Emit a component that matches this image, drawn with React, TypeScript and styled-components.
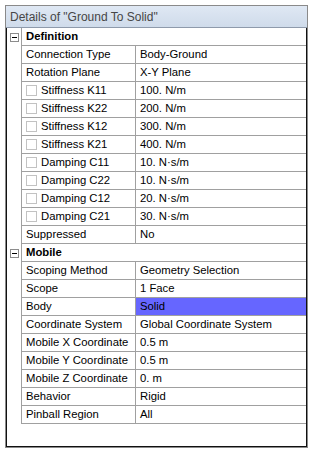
import styled, { createGlobalStyle } from 'styled-components'

// --------------------------------------------------------------------------------------------------------------
const GlobalStyle = createGlobalStyle`
  body {
    margin: 0;
    background: #ffffff;
    font-family: "Liberation Sans", Arial, sans-serif;
  }
`

const Panel = styled.div`
  margin: 5px 0 0 5px;
  width: 303px;
  height: 443px;
  box-sizing: border-box;
  border: 1px solid #8a8a8a;
  display: flex;
  flex-direction: column;
  background: #ffffff;
`

const TitleBar = styled.div`
  height: 22px;
  box-sizing: border-box;
  flex-shrink: 0;
  display: flex;
  align-items: center;
  padding-left: 4px;
  background: linear-gradient(#dfe8f4, #cfdbea);
  border-bottom: 1px solid #8e9aab;
  font-size: 12px;
  color: #464646;
  white-space: nowrap;
`

const Body = styled.div`
  flex: 1;
  display: flex;
  flex-direction: column;
  border: 1px solid #111111;
  border-top: none;
`

const Row = styled.div`
  display: flex;
  height: 18px;
  flex-shrink: 0;
`

const Gutter = styled.div`
  width: 14px;
  flex-shrink: 0;
  display: flex;
  align-items: center;
  justify-content: center;
`

const Expander = styled.div`
  width: 9px;
  height: 9px;
  box-sizing: border-box;
  border: 1px solid #8c8c8c;
  background: #ffffff;
  display: flex;
  align-items: center;
  justify-content: center;

  &::after {
    content: '';
    width: 5px;
    height: 1px;
    background: #000000;
  }
`

const Cells = styled.div`
  flex: 1;
  display: flex;
  box-sizing: border-box;
  border-left: 1px solid #a0a0a0;
  border-bottom: 1px solid #a0a0a0;
  font-size: 11.3px;
  line-height: 17px;
  color: #000000;
`

const CategoryLabel = styled.div`
  padding-left: 4px;
  font-weight: 700;
`

const NameCell = styled.div`
  width: 114px;
  flex-shrink: 0;
  box-sizing: border-box;
  border-right: 1px solid #a0a0a0;
  padding-left: 4px;
  display: flex;
  align-items: center;
  white-space: nowrap;
  overflow: hidden;
`

const ValueCell = styled.div<{ $selected?: boolean }>`
  flex: 1;
  padding-left: 4px;
  white-space: nowrap;
  overflow: hidden;
  background: ${(p) => (p.$selected ? '#6666ff' : 'transparent')};
`

const CheckBox = styled.span`
  width: 11px;
  height: 11px;
  box-sizing: border-box;
  border: 1px solid #c2c2c2;
  background: #ffffff;
  margin-right: 4px;
  flex-shrink: 0;
`

// --------------------------------------------------------------------------------------------------------------
type Prop = { name: string; value: string; check?: boolean; selected?: boolean }
type Group = { title: string; props: Prop[] }

const groups: Group[] = [
  {
    title: 'Definition',
    props: [
      { name: 'Connection Type', value: 'Body-Ground' },
      { name: 'Rotation Plane', value: 'X-Y Plane' },
      { name: 'Stiffness K11', value: '100. N/m', check: true },
      { name: 'Stiffness K22', value: '200. N/m', check: true },
      { name: 'Stiffness K12', value: '300. N/m', check: true },
      { name: 'Stiffness K21', value: '400. N/m', check: true },
      { name: 'Damping C11', value: '10. N·s/m', check: true },
      { name: 'Damping C22', value: '10. N·s/m', check: true },
      { name: 'Damping C12', value: '20. N·s/m', check: true },
      { name: 'Damping C21', value: '30. N·s/m', check: true },
      { name: 'Suppressed', value: 'No' },
    ],
  },
  {
    title: 'Mobile',
    props: [
      { name: 'Scoping Method', value: 'Geometry Selection' },
      { name: 'Scope', value: '1 Face' },
      { name: 'Body', value: 'Solid', selected: true },
      { name: 'Coordinate System', value: 'Global Coordinate System' },
      { name: 'Mobile X Coordinate', value: '0.5 m' },
      { name: 'Mobile Y Coordinate', value: '0.5 m' },
      { name: 'Mobile Z Coordinate', value: '0. m' },
      { name: 'Behavior', value: 'Rigid' },
      { name: 'Pinball Region', value: 'All' },
    ],
  },
]

export default function App() {
  return (
    <>
      <GlobalStyle />
      <Panel>
        <TitleBar>Details of "Ground To Solid"</TitleBar>
        <Body>
          {groups.map((g) => (
            <div key={g.title}>
              <Row>
                <Gutter>
                  <Expander />
                </Gutter>
                <Cells>
                  <CategoryLabel>{g.title}</CategoryLabel>
                </Cells>
              </Row>
              {g.props.map((p) => (
                <Row key={p.name}>
                  <Gutter />
                  <Cells>
                    <NameCell>
                      {p.check && <CheckBox />}
                      {p.name}
                    </NameCell>
                    <ValueCell $selected={p.selected}>{p.value}</ValueCell>
                  </Cells>
                </Row>
              ))}
            </div>
          ))}
        </Body>
      </Panel>
    </>
  )
}
